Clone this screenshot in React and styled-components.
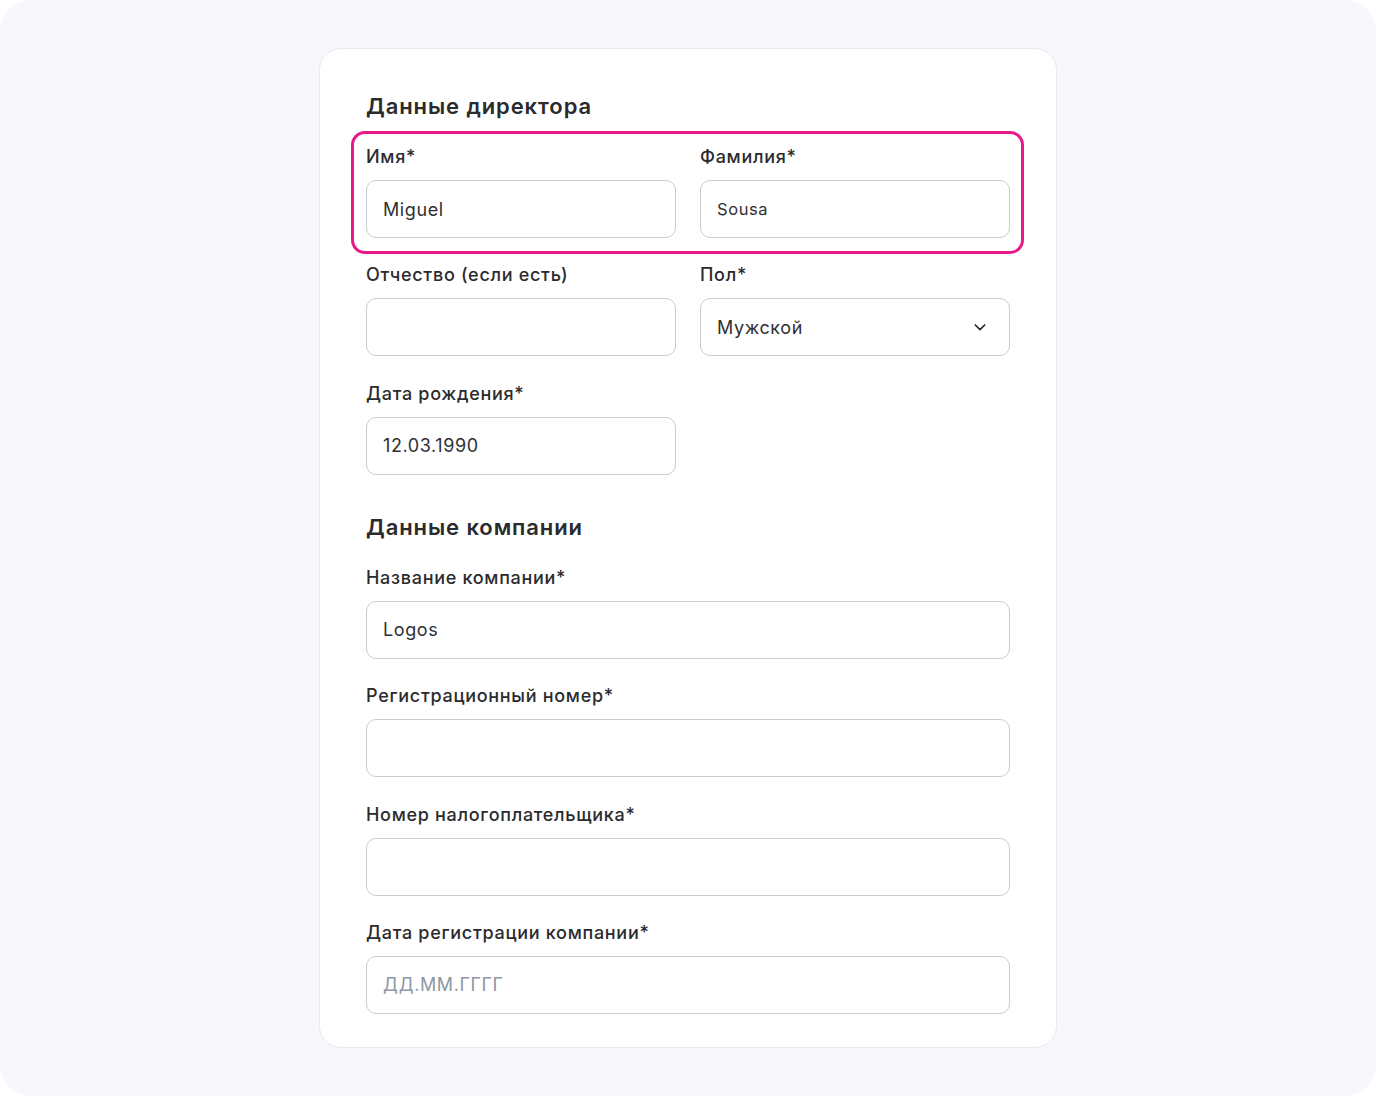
import styled, { createGlobalStyle } from 'styled-components';

const Global = createGlobalStyle`
  html, body {
    margin: 0;
    padding: 0;
    background: #ffffff;
  }
  body {
    font-family: Inter, "Noto Sans", sans-serif;
    color: #2b2b2e;
  }
  * { box-sizing: border-box; }
`;

const Screen = styled.div`
  width: 1376px;
  height: 1096px;
  background: #f8f8fc;
  border-radius: 32px;
  display: flex;
  justify-content: center;
  padding-top: 48px;
`;

const Card = styled.div`
  width: 738px;
  height: 1000px;
  background: #ffffff;
  border: 1px solid #e9e9ef;
  border-radius: 22px;
  padding: 42px 46px 0 46px;
  display: flex;
  flex-direction: column;
`;

const SectionTitle = styled.h2`
  margin: ${(p) => (p.$first ? '0' : '37px')} 0 0 0;
  font-size: 22px;
  line-height: 30px;
  font-weight: 600;
  color: #2b2b2e;
  letter-spacing: 0.9px;
`;

const Grid = styled.div`
  position: relative;
  display: grid;
  grid-template-columns: 1fr 1fr;
  column-gap: 24px;
  margin-top: 23px;
`;

const Highlight = styled.div`
  position: absolute;
  left: -15px;
  right: -14px;
  top: -13px;
  height: 123px;
  border: 3px solid #e8198b;
  border-radius: 14px;
  pointer-events: none;
`;

const Field = styled.div`
  grid-column: ${(p) => (p.$wide ? '1 / span 2' : 'auto')};
  display: flex;
  flex-direction: column;
  margin-bottom: ${(p) => (p.$last ? '0' : '24.4px')};
`;

const Label = styled.label`
  font-size: 18px;
  line-height: 24px;
  font-weight: 500;
  color: #2b2b2e;
  letter-spacing: 0.7px;
  margin-top: 1px;
  margin-bottom: 11px;
`;

const Input = styled.input`
  height: 58px;
  width: 100%;
  border: 1px solid #c9ccd2;
  border-radius: 10px;
  padding: 0 17px 0 16px;
  font-family: Inter, "Noto Sans", sans-serif;
  font-size: ${(p) => p.$size || 18}px;
  letter-spacing: 0.6px;
  color: #2f2f33;
  background: #fff;
  outline: none;
  &::placeholder {
    color: #8e97a2;
  }
`;

const SelectBox = styled.div`
  height: 58px;
  border: 1px solid #c9ccd2;
  border-radius: 10px;
  padding: 0 21px 0 16px;
  display: flex;
  align-items: center;
  justify-content: space-between;
  font-size: 18px;
  letter-spacing: 0.6px;
  color: #2f2f33;
`;

const Chevron = () => (
  <svg width="16" height="16" viewBox="0 0 24 24" fill="none" stroke="#2b2b2e" strokeWidth="2.6" strokeLinecap="round" strokeLinejoin="round">
    <path d="M5 9l7 7 7-7" />
  </svg>
);

export default function App() {
  return (
    <>
      <Global />
      <Screen>
        <Card>
          <SectionTitle $first>Данные директора</SectionTitle>
          <Grid>
            <Highlight />
            <Field>
              <Label>Имя*</Label>
              <Input defaultValue="Miguel" />
            </Field>
            <Field>
              <Label>Фамилия*</Label>
              <Input defaultValue="Sousa" $size={16.5} />
            </Field>
            <Field>
              <Label>Отчество (если есть)</Label>
              <Input />
            </Field>
            <Field>
              <Label>Пол*</Label>
              <SelectBox>
                <span>Мужской</span>
                <Chevron />
              </SelectBox>
            </Field>
            <Field $last>
              <Label>Дата рождения*</Label>
              <Input defaultValue="12.03.1990" />
            </Field>
          </Grid>
          <SectionTitle>Данные компании</SectionTitle>
          <Grid>
            <Field $wide>
              <Label>Название компании*</Label>
              <Input defaultValue="Logos" />
            </Field>
            <Field $wide>
              <Label>Регистрационный номер*</Label>
              <Input />
            </Field>
            <Field $wide>
              <Label>Номер налогоплательщика*</Label>
              <Input />
            </Field>
            <Field $wide $last>
              <Label>Дата регистрации компании*</Label>
              <Input placeholder="ДД.ММ.ГГГГ" />
            </Field>
          </Grid>
        </Card>
      </Screen>
    </>
  );
}
